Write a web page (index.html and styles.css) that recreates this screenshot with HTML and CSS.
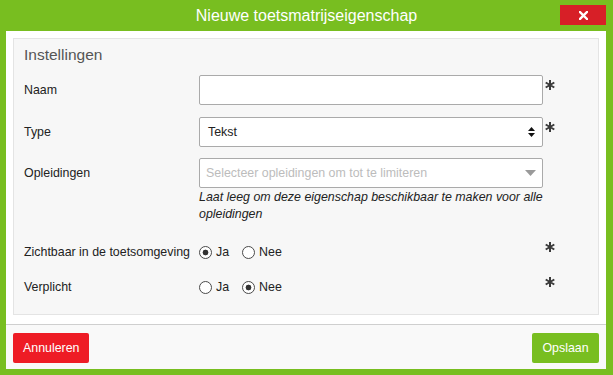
FILE: index.html
```html
<!DOCTYPE html>
<html lang="nl">
<head>
<meta charset="utf-8">
<title>Nieuwe toetsmatrijseigenschap</title>
<link rel="stylesheet" href="styles.css">
</head>
<body>
<header class="dlg-header">
  <div class="dlg-title">Nieuwe toetsmatrijseigenschap</div>
  <button class="dlg-close" type="button" aria-label="Sluiten">
    <svg width="9" height="9" viewBox="0 0 9 9"><path d="M1 1L8 8M8 1L1 8" stroke="#fff" stroke-width="2.4" stroke-linecap="square"/></svg>
  </button>
</header>
<main class="dlg-body">
  <section class="panel">
    <h2 class="panel-title">Instellingen</h2>

    <div class="form-row row-naam">
      <label class="lbl">Naam</label>
      <div class="input"></div>
      <svg class="req" width="10" height="10" viewBox="0 0 10 10"><path d="M5 0V10M0.7 2.5L9.3 7.5M0.7 7.5L9.3 2.5" stroke="#3b3b3b" stroke-width="2"/></svg>
    </div>

    <div class="form-row row-type">
      <label class="lbl">Type</label>
      <div class="input select">
        <span class="val">Tekst</span>
        <svg width="7" height="10" viewBox="0 0 7 10"><path d="M3.5 0L7 4H0Z M0 6H7L3.5 10Z" fill="#111"/></svg>
      </div>
      <svg class="req" width="10" height="10" viewBox="0 0 10 10"><path d="M5 0V10M0.7 2.5L9.3 7.5M0.7 7.5L9.3 2.5" stroke="#3b3b3b" stroke-width="2"/></svg>
    </div>

    <div class="form-row row-opl">
      <label class="lbl">Opleidingen</label>
      <div class="input select placeholder">
        <span class="val">Selecteer opleidingen om tot te limiteren</span>
        <svg width="11" height="6" viewBox="0 0 11 6"><path d="M0 0H11L5.5 6Z" fill="#9a9a9a"/></svg>
      </div>
    </div>
    <div class="form-row row-help">
      <p class="help">Laat leeg om deze eigenschap beschikbaar te maken voor alle opleidingen</p>
    </div>

    <div class="form-row row-zicht">
      <label class="lbl">Zichtbaar in de toetsomgeving</label>
      <div class="radios">
        <label class="opt"><input type="radio" name="zicht" checked><span>Ja</span></label>
        <label class="opt"><input type="radio" name="zicht"><span>Nee</span></label>
      </div>
      <svg class="req" width="10" height="10" viewBox="0 0 10 10"><path d="M5 0V10M0.7 2.5L9.3 7.5M0.7 7.5L9.3 2.5" stroke="#3b3b3b" stroke-width="2"/></svg>
    </div>

    <div class="form-row row-verpl">
      <label class="lbl">Verplicht</label>
      <div class="radios">
        <label class="opt"><input type="radio" name="verpl"><span>Ja</span></label>
        <label class="opt"><input type="radio" name="verpl" checked><span>Nee</span></label>
      </div>
      <svg class="req" width="10" height="10" viewBox="0 0 10 10"><path d="M5 0V10M0.7 2.5L9.3 7.5M0.7 7.5L9.3 2.5" stroke="#3b3b3b" stroke-width="2"/></svg>
    </div>
  </section>
  <footer class="dlg-footer">
    <button class="btn btn-cancel" type="button">Annuleren</button>
    <button class="btn btn-save" type="button">Opslaan</button>
  </footer>
</main>
</body>
</html>
```

FILE: styles.css
```css
* { box-sizing: border-box; }
html, body { height: 100%; }
body {
  margin: 0;
  background: #78be20;
  font-family: "Liberation Sans", Arial, sans-serif;
  font-size: 12.4px;
  color: #222;
  display: flex;
  flex-direction: column;
  overflow: hidden;
}
.dlg-header {
  height: 31px;
  display: grid;
  grid-template-columns: 1fr auto 1fr;
  flex: none;
}
.dlg-title {
  grid-column: 2;
  color: #fff;
  font-size: 16px;
  line-height: 31px;
}
.dlg-close {
  grid-column: 3;
  justify-self: end;
  align-self: start;
  margin: 5px 7px 0 0;
  width: 46px;
  height: 20px;
  border: 0;
  padding: 0;
  background: #d71f27;
  display: flex;
  align-items: center;
  justify-content: center;
}
.dlg-body {
  flex: 1;
  margin: 0 7px 6px 6px;
  background: #fff;
  display: flex;
  flex-direction: column;
}
.panel {
  margin: 7px 7px 9px 7px;
  height: 277px;
  background: #f7f7f7;
  border: 1px solid #e4e4e4;
  padding: 6px 10px 0 10px;
}
.panel-title {
  margin: 0 0 10px 0;
  font-weight: normal;
  font-size: 15.5px;
  line-height: 20px;
  color: #555;
}
.form-row {
  display: grid;
  grid-template-columns: 175px 344px 12px;
  align-items: center;
}
.row-naam { margin-bottom: 12px; }
.row-type { margin-bottom: 11px; }
.row-help { margin-top: 1px; margin-bottom: 14px; }
.row-zicht { margin-bottom: 5px; }
.lbl {
  grid-column: 1;
  line-height: 30px;
  white-space: nowrap;
}
.input {
  grid-column: 2;
  height: 30px;
  background: #fff;
  border: 1px solid #aaa;
  border-radius: 2px;
}
.select {
  display: flex;
  align-items: center;
  justify-content: space-between;
  padding: 0 7px 0 8px;
}
.select.placeholder {
  padding-left: 6px;
  padding-right: 6px;
}
.select.placeholder .val { color: #bcbcbc; }
.req {
  grid-column: 3;
  align-self: start;
  margin: 5px 0 0 2px;
}
.help {
  grid-column: 2 / 4;
  margin: 0;
  font-style: italic;
  line-height: 17px;
  color: #222;
}
.radios {
  grid-column: 2;
  display: flex;
  align-items: center;
  height: 30px;
  gap: 13px;
}
.opt {
  display: flex;
  align-items: center;
  gap: 4px;
}
.opt input {
  appearance: none;
  -webkit-appearance: none;
  margin: 0;
  width: 13px;
  height: 13px;
  border: 1px solid #4a4a4a;
  border-radius: 50%;
  background: #fff;
}
.opt input:checked {
  background: radial-gradient(circle, #333 0 2.6px, #fff 3.2px);
}
.dlg-footer {
  flex: 1;
  border-top: 1px solid #cfcfcf;
  background: #f9f9f9;
  display: flex;
  justify-content: space-between;
  align-items: flex-start;
  padding: 8px 7px 0 7px;
}
.btn {
  height: 30px;
  border: 0;
  border-radius: 2px;
  padding: 0 10px;
  color: #fff;
  font-family: "Liberation Sans", Arial, sans-serif;
  font-size: 12.4px;
}
.btn-cancel { background: #ee1c25; width: 76px; }
.btn-save { background: #78be20; width: 67px; }
```
